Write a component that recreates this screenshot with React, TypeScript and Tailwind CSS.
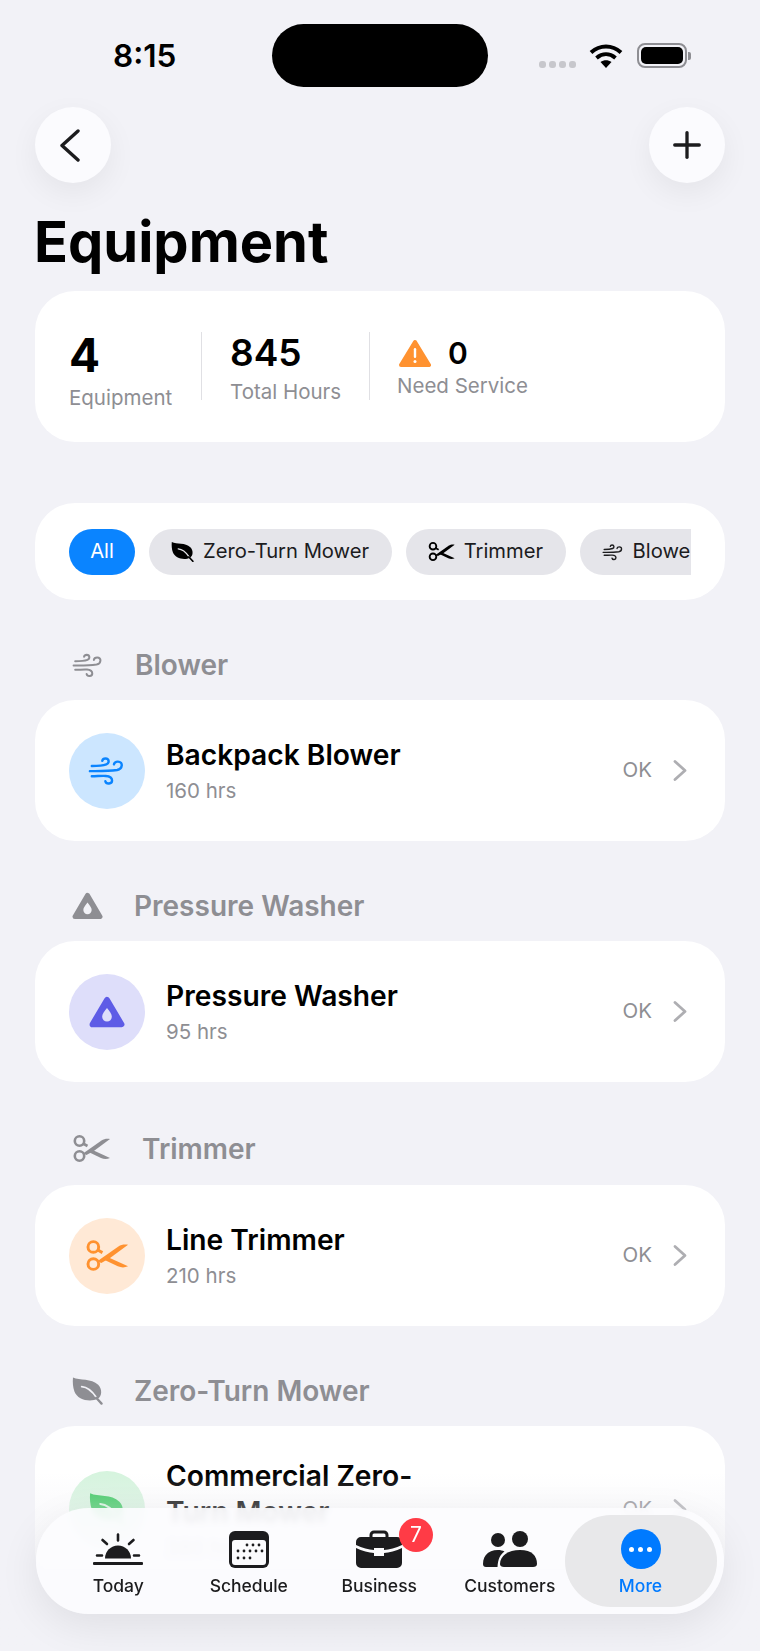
import React from 'react';
import { Plus } from 'lucide-react';

type IconProps = { className?: string; hole?: string };

const WindIcon: React.FC<IconProps> = ({ className }) => (
    <svg viewBox="0 0 30 24" fill="none" stroke="currentColor" strokeWidth="1.9" strokeLinecap="round" className={className}>
        <path d="M3 8.500c5 0 9-.4 11.500-1.300 2.600-1 2.300-4.700-.7-4.700-1.500 0-2.300.9-2.500 1.800" />
        <path d="M1.500 12.500c8 0 14 .2 21.500-.9 4.500-.8 5-6.600.6-6.600-1.800 0-2.900 1-3.100 2.200" />
        <path d="M3 16.500c4 0 8-.4 11-.2 3.700.3 5 1.700 5 3.600 0 2.900-4.600 3.300-5.300.6" />
    </svg>
);

const WasherIcon: React.FC<IconProps> = ({ className, hole = '#f2f2f7' }) => (
    <svg viewBox="0 0 32 28" className={className}>
        <path d="M16 3 29 25H3Z" fill="currentColor" stroke="currentColor" strokeWidth="5" strokeLinejoin="round" />
        <path d="M16 10.500c2.600 3.300 4.300 5.500 4.300 7.700a4.300 4.300 0 0 1-8.600 0c0-2.200 1.700-4.400 4.300-7.700Z" fill={hole} />
    </svg>
);

const ScissorsIcon: React.FC<IconProps> = ({ className }) => (
    <svg viewBox="0 0 38 29" className={className}>
        <circle cx="7" cy="7" r="4.700" fill="none" stroke="currentColor" strokeWidth="2.600" />
        <circle cx="7" cy="22" r="4.700" fill="none" stroke="currentColor" strokeWidth="2.600" />
        <path d="M10.500 9.500 15 12" stroke="currentColor" strokeWidth="2.600" />
        <path d="M10.500 19.500 29 6.500c2.500-1.700 5.500-2 8.500-1.500L22 16.500 14 21Z" fill="currentColor" />
        <path d="M19 15.500 37.500 24c-3 1.300-6 1.300-9 0L16 18Z" fill="currentColor" />
    </svg>
);

const LeafIcon: React.FC<IconProps> = ({ className, hole = '#f2f2f7' }) => (
    <svg viewBox="0 0 32 28" className={className}>
        <path d="M1 0c7 3.500 19 .5 26 7.500 4.500 4.500 4 12-.5 14.500-8 4-21 1-24-7.500C1 10 .5 5 1 0Z" fill="currentColor" />
        <path d="M10 9.500c6 .5 11 5 15 11" fill="none" stroke={hole} strokeWidth="1.800" strokeLinecap="round" />
        <path d="M25 21 30.500 27" fill="none" stroke="currentColor" strokeWidth="2.400" strokeLinecap="round" />
    </svg>
);

const SunriseIcon = () => (
    <svg viewBox="0 0 50 33" className="w-[50px] h-[33px] text-[#1c1c1e]">
        <path d="M12 25.500a13 13 0 0 1 26 0Z" fill="currentColor" />
        <rect x="0" y="29" width="50" height="3" rx="1" fill="currentColor" />
        <g stroke="currentColor" strokeWidth="2.600" strokeLinecap="round">
            <path d="M25 1.500v6M9.500 7l4.500 4M40.500 7 36 11M4 22.500h5M41 22.500h5" />
        </g>
    </svg>
);

const CalendarIcon = () => (
    <svg viewBox="0 0 40 37" className="w-[40px] h-[37px]">
        <rect width="40" height="37" rx="6" fill="#1c1c1e" />
        <rect x="3" y="9" width="34" height="25" rx="3" fill="#fbfbfd" />
        <g fill="#1c1c1e">
            {[[18, 14], [24, 14], [30, 14], [9, 20], [15, 20], [21, 20], [27, 20], [33, 20], [9, 27], [15, 27], [21, 27]].map(([cx, cy]) => (
                <circle key={`${cx}-${cy}`} cx={cx} cy={cy} r="1.400" />
            ))}
        </g>
    </svg>
);

const BriefcaseIcon = () => (
    <svg viewBox="0 0 46 38" className="w-[46px] h-[38px]">
        <path d="M15 8V5a3 3 0 0 1 3-3h10a3 3 0 0 1 3 3v3" fill="none" stroke="#1c1c1e" strokeWidth="3" />
        <path d="M5 7h36a5 5 0 0 1 5 5v3c-6 3-13 4.500-18 5v-2H18v2c-5-.5-12-2-18-5v-3a5 5 0 0 1 5-5Z" fill="#1c1c1e" />
        <path d="M0 18c6 3 13 4.500 18 5v3h10v-3c5-.5 12-2 18-5v15a5 5 0 0 1-5 5H5a5 5 0 0 1-5-5Z" fill="#1c1c1e" />
    </svg>
);

const PeopleIcon = () => (
    <svg viewBox="0 0 54 36" className="w-[54px] h-[36px]" fill="#1c1c1e">
        <circle cx="15" cy="9" r="7" />
        <circle cx="37" cy="8" r="8" />
        <path d="M0 33c0-9 6-14 15-14 2.500 0 4.500.5 6.500 1.500C17 24 15 28 14.500 36H3c-2 0-3-1-3-3Z" />
        <path d="M21 36c-2.500 0-4-1-4-3 0-8 8-14 20-14s17 6 17 14c0 2-1.500 3-4 3Z" />
    </svg>
);

const WarningIcon = () => (
    <svg viewBox="0 0 32 29" className="w-[32px] h-[29px]">
        <path d="M16 3 30 26H2Z" fill="#ff9230" stroke="#ff9230" strokeWidth="4" strokeLinejoin="round" />
        <rect x="14.800" y="9" width="2.400" height="10" rx="1.200" fill="#fff" />
        <circle cx="16" cy="22.500" r="1.500" fill="#fff" />
    </svg>
);

const StatusIcons = () => (
    <div className="flex items-center">
        <div className="flex gap-[3px] mt-[18px] mr-[13px]">
            {[0, 1, 2, 3].map((i) => (
                <div key={i} className="w-[7px] h-[7px] rounded-[3px] bg-[#c7c7cc]" />
            ))}
        </div>
        <svg viewBox="0 0 34 24" className="w-[34px] h-[24px] mr-[14px]" fill="none" stroke="#000" strokeWidth="4">
            <path d="M2 8.500c9-8 21-8 30 0" />
            <path d="M7.500 14c6-5 13-5 19 0" />
            <path d="M17 24l-5.500-6c3.500-2.500 7.500-2.500 11 0Z" fill="#000" stroke="none" />
        </svg>
        <div className="flex items-center">
            <div className="w-[50px] h-[25px] rounded-[8px] border-2 border-[#8e8e93] p-[2px]">
                <div className="w-full h-full rounded-[5px] bg-black" />
            </div>
            <div className="w-[3px] h-[8px] rounded-r-[2px] bg-[#8e8e93] ml-[1px]" />
        </div>
    </div>
);

const Divider = () => <div className="w-px h-[68px] bg-[#e0e0e4]" />;

const StatsCard = () => (
    <div className="mt-[15px] h-[151px] rounded-[40px] bg-white flex items-start pt-[41px] pl-[34px]">
        <div className="w-[132px]">
            <div className="text-[46px] leading-[46px] font-bold text-black">4</div>
            <div className="mt-[7px] text-[20.5px] leading-[26px] text-[#8e8e93]">Equipment</div>
        </div>
        <Divider />
        <div className="pl-[28px] w-[167px]">
            <div className="text-[37px] leading-[42px] font-semibold text-black">845</div>
            <div className="mt-[5px] text-[20.5px] leading-[26px] text-[#8e8e93]">Total Hours</div>
        </div>
        <Divider />
        <div className="pl-[27px]">
            <div className="flex items-center gap-[17px] h-[42px] pl-[2px]">
                <WarningIcon />
                <span className="text-[30px] leading-[42px] font-semibold text-black">0</span>
            </div>
            <div className="-mt-[1px] text-[20.5px] leading-[26px] text-[#8e8e93]">Need Service</div>
        </div>
    </div>
);

const FilterPill: React.FC<{ icon: React.ReactNode; label: string }> = ({ icon, label }) => (
    <div className="h-[46px] shrink-0 rounded-[23px] bg-[#e5e5ea] flex items-center gap-[9px] pl-[22px] pr-[22.5px] text-[20.2px] text-[#1c1c1e]">
        {icon}
        <span>{label}</span>
    </div>
);

const FilterCard = () => (
    <div className="mt-[61px] h-[97px] rounded-[40px] bg-white px-[34px] flex items-center">
        <div className="w-full flex gap-[14px] overflow-hidden">
            <div className="h-[46px] w-[66px] shrink-0 rounded-[23px] bg-[#0a84ff] flex items-center justify-center text-[20.2px] text-white">All</div>
            <FilterPill icon={<LeafIcon className="w-[23px] h-[20px] text-black" hole="#e5e5ea" />} label="Zero-Turn Mower" />
            <FilterPill icon={<ScissorsIcon className="w-[27px] h-[21px] text-black" />} label="Trimmer" />
            <FilterPill icon={<WindIcon className="w-[22px] h-[18px] text-[#1c1c1e]" />} label="Blower" />
        </div>
    </div>
);

const SectionHeader: React.FC<{ icon: React.ReactNode; label: string; tall?: boolean }> = ({ icon, label, tall }) => (
    <div className={`mt-[30px] pl-[37px] flex items-center gap-[31px] text-[#8e8e93] ${tall ? 'h-[73px]' : 'h-[70px]'}`}>
        {icon}
        <span className="text-[28px] leading-[34px] font-semibold">{label}</span>
    </div>
);

const EquipmentRow: React.FC<{ icon: React.ReactNode; tint: string; name: string; hours: string }> = ({ icon, tint, name, hours }) => (
    <div className="rounded-[40px] bg-white pl-[34px] pr-[38px] py-[32.5px] flex items-center">
        <div className={`w-[76px] h-[76px] shrink-0 rounded-full flex items-center justify-center ${tint}`}>{icon}</div>
        <div className="ml-[21px] w-[270px]">
            <div className="text-[28.2px] leading-[36px] font-semibold text-black -mt-[1px]">{name}</div>
            <div className="mt-[6px] text-[20.5px] leading-[24px] text-[#8e8e93]">{hours}</div>
        </div>
        <div className="ml-auto flex items-center gap-[21px]">
            <span className="text-[20.5px] text-[#8e8e93]">OK</span>
            <svg viewBox="0 0 14 23" className="w-[14px] h-[23px]" fill="none" stroke="#aeaeb2" strokeWidth="2.800" strokeLinecap="round" strokeLinejoin="round">
                <path d="M2 2.500 12 11.500 2 20.500" />
            </svg>
        </div>
    </div>
);

const TabItem: React.FC<{ icon: React.ReactNode; label: string; badge?: string }> = ({ icon, label, badge }) => (
    <div className="relative w-[130.5px] h-[92px] flex flex-col items-center">
        <div className="h-[40px] mt-[14px] flex items-center justify-center">{icon}</div>
        <span className="mt-[6px] text-[17.5px] leading-[22px] font-medium text-[#1c1c1e]">{label}</span>
        {badge && (
            <div className="absolute left-[85px] top-[3px] w-[34px] h-[34px] rounded-full bg-[#ff3b46] flex items-center justify-center text-[21px] text-white">
                {badge}
            </div>
        )}
    </div>
);

const TabBar = () => (
    <div className="absolute left-[36px] bottom-[37px] w-[688px] h-[106px] rounded-[53px] bg-[#fcfcfe]/90 backdrop-blur-[3px] shadow-[0_12px_40px_rgba(0,0,0,0.08)] flex items-center pl-[17px]">
        <TabItem icon={<SunriseIcon />} label="Today" />
        <TabItem icon={<CalendarIcon />} label="Schedule" />
        <TabItem icon={<BriefcaseIcon />} label="Business" badge="7" />
        <TabItem icon={<PeopleIcon />} label="Customers" />
        <div className="ml-[-10.5px] w-[152px] h-[92px] rounded-[46px] bg-[#e8e8ea] flex flex-col items-center">
            <div className="mt-[14px] w-[40px] h-[40px] rounded-full bg-[#007aff] flex items-center justify-center gap-[4px]">
                {[0, 1, 2].map((i) => (
                    <div key={i} className="w-[5px] h-[5px] rounded-full bg-white" />
                ))}
            </div>
            <span className="mt-[6px] text-[17.5px] leading-[22px] font-medium text-[#007aff]">More</span>
        </div>
    </div>
);

export default function App() {
    return (
        <div className="relative w-[760px] h-[1651px] overflow-hidden bg-[#f2f2f7] font-['Inter',sans-serif]">
            <div className="relative pt-[24px] h-[87px] pl-[113px] pr-[69px] flex justify-between">
                <span className="text-[31.5px] leading-[64px] font-semibold text-black">8:15</span>
                <div className="absolute left-[272px] top-[24px] w-[216px] h-[63px] rounded-[32px] bg-black" />
                <StatusIcons />
            </div>

            <div className="px-[35px]">
                <div className="mt-[20px] flex justify-between">
                    <button className="w-[76px] h-[76px] rounded-full bg-[#fbfbfe] shadow-[0_10px_30px_rgba(0,0,0,0.06)] flex items-center justify-center">
                        <svg viewBox="0 0 20 33" className="w-[20px] h-[33px] -ml-[6px]" fill="none" stroke="#1c1c1e" strokeWidth="3.400" strokeLinecap="round" strokeLinejoin="round">
                            <path d="M18 2 2 16.500 18 31" />
                        </svg>
                    </button>
                    <button className="w-[76px] h-[76px] rounded-full bg-[#fbfbfe] shadow-[0_10px_30px_rgba(0,0,0,0.06)] flex items-center justify-center">
                        <Plus className="w-[42px] h-[42px] text-[#1c1c1e]" strokeWidth={1.9} />
                    </button>
                </div>

                <h1 className="mt-[25px] -ml-px text-[56px] leading-[68px] font-bold text-black">Equipment</h1>

                <StatsCard />
                <FilterCard />

                <SectionHeader icon={<WindIcon className="w-[32px] h-[26px]" />} label="Blower" />
                <EquipmentRow
                    icon={<WindIcon className="w-[38px] h-[31px] text-[#0a84ff]" />}
                    tint="bg-[#cce6ff]"
                    name="Backpack Blower"
                    hours="160 hrs"
                />

                <SectionHeader icon={<WasherIcon className="w-[31px] h-[28px]" />} label="Pressure Washer" />
                <EquipmentRow
                    icon={<WasherIcon className="w-[36px] h-[32px] text-[#5e5ce6]" hole="#dedefa" />}
                    tint="bg-[#dedefa]"
                    name="Pressure Washer"
                    hours="95 hrs"
                />

                <SectionHeader icon={<ScissorsIcon className="w-[39px] h-[29px]" />} label="Trimmer" tall />
                <EquipmentRow
                    icon={<ScissorsIcon className="w-[44px] h-[33px] text-[#ff9230]" />}
                    tint="bg-[#ffe9d6]"
                    name="Line Trimmer"
                    hours="210 hrs"
                />

                <SectionHeader icon={<LeafIcon className="w-[31px] h-[28px]" />} label="Zero-Turn Mower" />
                <EquipmentRow
                    icon={<LeafIcon className="w-[36px] h-[32px] text-[#34c759]" hole="#d6f4de" />}
                    tint="bg-[#d6f4de]"
                    name="Commercial Zero-Turn Mower"
                    hours="380 hrs"
                />
            </div>

            {/* content fades out as it scrolls under the tab bar */}
            <div className="absolute inset-x-0 bottom-0 h-[210px] bg-gradient-to-b from-[#f2f2f7]/0 from-[15%] via-[#f2f2f7]/40 via-[35%] to-[#f2f2f7] pointer-events-none" />
            <TabBar />
        </div>
    );
}
